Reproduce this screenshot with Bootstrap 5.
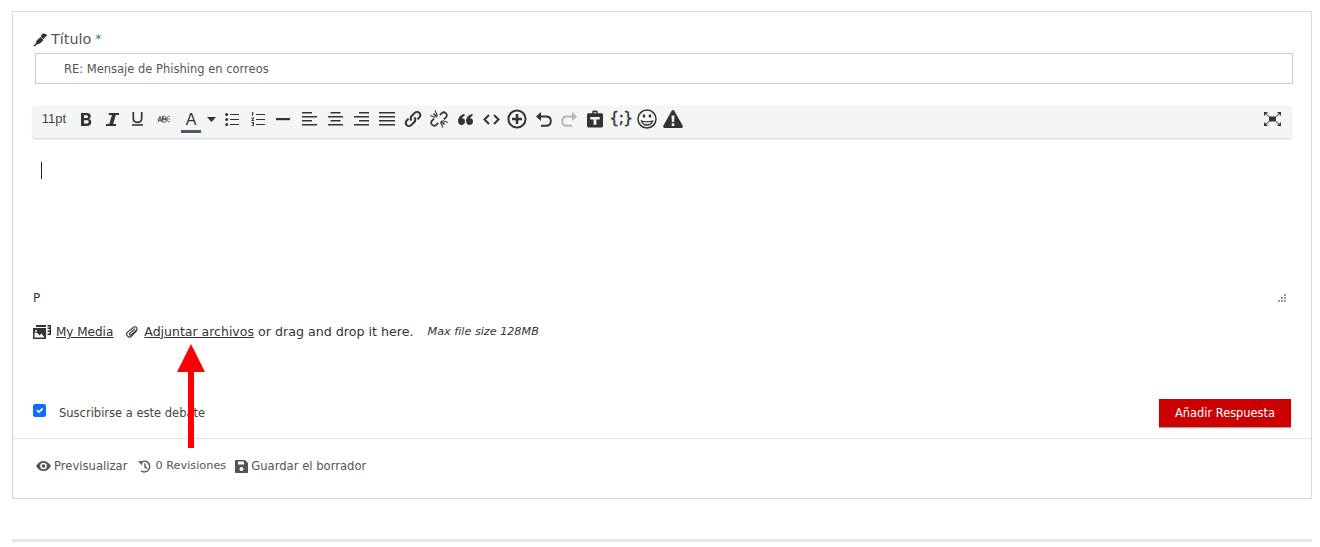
<!DOCTYPE html>
<html lang="es">
<head>
<meta charset="utf-8">
<title>Respuesta</title>
<link href="https://cdn.jsdelivr.net/npm/bootstrap@5.3.0/dist/css/bootstrap.min.css" rel="stylesheet">
<style>
html,body{height:547px;overflow:hidden}
body{background:#fff;font-family:"DejaVu Sans",Verdana,sans-serif;color:#333;font-size:11.6px;padding:11px 8px 0 12px;position:relative}
.panel-box{border:1px solid #d9d9d9;height:488px;display:flex;flex-direction:column}
.form-area{padding:0 20px;flex:0 0 426px;display:flex;flex-direction:column}
.title-label{margin-top:17px;margin-bottom:2px;height:22px;font-size:14.4px;color:#555;display:flex;align-items:center;gap:3px}
.title-label .req{color:#2a8a7a;font-size:12px;margin-left:1px;position:relative;top:-1px}
.title-input{margin-left:2px;width:1258px;height:31px;border:1px solid #ccc;padding:2px 0 0 28px;font-size:11.5px;color:#555;display:flex;align-items:center;box-shadow:inset 0 0 1px #eee}
.ed-bar{margin-top:22px;height:32px;background:#f4f6f6;box-shadow:0 1px 2px rgba(0,0,0,.2);display:flex;align-items:center;width:1258px;color:#333;padding-bottom:6px}
.ed-size{width:40px;text-align:center;font-family:"Liberation Sans",Arial,sans-serif;font-size:13px;color:#444;padding-left:2px}
.tb{width:26px;height:26px;display:flex;align-items:center;justify-content:center;flex:none}
.tb svg{display:block}
.tb-u{margin-left:-1px}
.tb-abc{margin-left:1px}
.tb-a{flex-direction:column;margin-left:1px;position:relative;top:3px;font-size:16px;line-height:15px;font-family:"Liberation Sans",Arial,sans-serif}
.tb-a i{display:block;width:20px;height:3px;background:#505a62;margin-top:3px}
.tb-c{width:16px;margin-left:-1px}
.tb-hr{margin-left:-1px}
.tb-br{font-size:15.5px;font-weight:400;-webkit-text-stroke:.4px #333;letter-spacing:-.5px;white-space:nowrap;color:#333}
.tb-end{margin-left:auto;margin-right:6px}
.ed-body{height:148px;position:relative}
.caret-bar{position:absolute;left:8px;top:24px;width:1px;height:17px;background:#222}
.ed-foot{margin-top:2px;height:20px;display:flex;justify-content:space-between;align-items:center;width:1258px;font-size:12px;color:#333;padding-right:5px}
.att-row{margin-top:14px;height:20px;display:flex;align-items:center;font-size:12.5px;color:#333;white-space:nowrap}
.att-row a{color:#333;text-decoration:underline}
.att-media{margin-right:5px}
.att-first{font-size:12px}
.att-clip{margin-left:13px;margin-right:5px}
.att-tail{font-size:12.66px}
.att-row em{font-size:11.2px;margin-left:14px}
.sub-row{margin-top:57px;height:28px;width:1258px;display:flex;align-items:center;justify-content:space-between}
.sub-check{display:flex;align-items:center;margin:0;padding:0;min-height:0;font-size:11.5px;color:#444;gap:13px}
.sub-check .form-check-input{margin:0;width:13px;height:13px;float:none;border-radius:2px;position:relative;top:-3px}
.sub-check span{padding-top:2px}
.send-btn{background:#c00;color:#fff;border:0;border-radius:0;width:132px;height:28px;font-size:11.4px;padding:2px 0 0;box-shadow:0 1px 1px rgba(0,0,0,.35)}
.btm-row{border-top:1px solid #e3e3e3;flex:1;display:flex;align-items:center;padding:0 0 4px 23px;color:#555;font-size:11.6px;gap:10px}
.btm-row span{display:flex;align-items:center}
.bt-prev{gap:3px;margin-right:1px}
.bt-rev{gap:4px;font-size:11.3px;margin-right:-1px}
.bt-save{gap:3px}
.page-rule{height:3px;background:#e6e6e6;margin-top:40px;width:1300px}
.mark-arrow{position:absolute;left:177px;top:344px}
</style>
</head>
<body>
<div class="panel-box">
  <div class="form-area">
    <div class="title-label">
      <svg width="15" height="14" viewBox="0 0 15 14" fill="#333"><path d="M8.500 1.500c1-1 3-1.300 4.500-.3l1.500 1.300-1.500.8-1.500 1.500-1 1.500-2.500-2.500zM7.500 4l3 3-3.500 3.500-3 1L1.500 13.500l-1-.8 2-2 1-3z"/></svg>
      <span>Título</span><span class="req">*</span>
    </div>
    <div class="title-input">RE: Mensaje de Phishing en correos</div>
    <div class="ed-bar">
      <div class="ed-size">11pt</div>
      <div class="tb"><svg width="12" height="13" viewBox="0 0 12 13" fill="#333"><path fill-rule="evenodd" d="M1 0h6c2.400 0 3.700 1.200 3.700 3.200 0 1.300-.7 2.200-1.700 2.700 1.400.4 2.300 1.400 2.300 3C11.300 11.500 9.600 13 7 13H1zm3 2.300v2.800h2.500c1 0 1.500-.5 1.500-1.400S7.500 2.300 6.500 2.300zm0 5v3.300h2.800c1.200 0 1.800-.6 1.800-1.700S8.500 7.300 7.300 7.300z"/></svg></div>
      <div class="tb"><svg width="13" height="13" viewBox="0 0 13 13" fill="#333"><path d="M3 0h10v2H9.800L7.200 11H10v2H0v-2h3.300l2.600-9H2.500z"/></svg></div>
      <div class="tb tb-u"><svg width="13" height="14" viewBox="0 0 13 14" fill="none" stroke="#333" stroke-width="1.700"><path d="M2.300 0v6.500c0 2.500 1.600 3.800 4.200 3.800s4.200-1.300 4.200-3.800V0"/><path d="M1 13h11" stroke-width="1.600"/></svg></div>
      <div class="tb tb-abc"><svg width="16" height="8" viewBox="0 0 16 10" fill="none" stroke="#333" stroke-width="1"><path d="M.5 9 3 1.500 5.500 9M1.300 7h3.400M6.500 1.500V9h2.300c2.500 0 2.500-3.800 0-3.800H6.500m0 0V1.500h2c2 0 2 3.700 0 3.700M15.500 2.500c-1-1.500-4-1.200-4 2.500s3 4 4 2.500"/><path d="M0 5h16" stroke-width=".8"/></svg></div>
      <div class="tb tb-a"><span>A</span><i></i></div>
      <div class="tb tb-c"><svg width="9" height="5" viewBox="0 0 9 5" fill="#333"><path d="M0 0h9L4.500 5z"/></svg></div>
      <div class="tb"><svg width="14" height="13" viewBox="0 0 14 13" fill="#333"><circle cx="1.700" cy="1.500" r="1.500"/><circle cx="1.700" cy="6.500" r="1.500"/><circle cx="1.700" cy="11.500" r="1.500"/><path d="M5 1h9v1H5zM5 6h9v1H5zM5 11h9v1H5z"/></svg></div>
      <div class="tb"><svg width="14" height="14" viewBox="0 0 14 14" fill="#333"><path d="M5 2h9v1H5zM5 7h9v1H5zM5 12h9v1H5z"/><path d="M1 0h1.200v3.800H1zM.5 5.500h2.500v1.200L1.500 8H3v.9H.5V8L2 6.500H.5zM.5 10h2.500v3.800H.5v-.8H2v-.7H1v-.7h1v-.7H.5z"/></svg></div>
      <div class="tb tb-hr"><svg width="14" height="3" viewBox="0 0 14 3" fill="#333"><path d="M0 0h14v2.200H0z"/></svg></div>
      <div class="tb"><svg width="15" height="14" viewBox="0 0 15 14" fill="#333"><path d="M0 0h10v1.500H0zM0 4h15v1.500H0zM0 8h10v1.500H0zM0 12h15v1.500H0z"/></svg></div>
      <div class="tb"><svg width="15" height="14" viewBox="0 0 15 14" fill="#333"><path d="M2.500 0h10v1.500h-10zM0 4h15v1.500H0zM2.500 8h10v1.500h-10zM0 12h15v1.500H0z"/></svg></div>
      <div class="tb"><svg width="15" height="14" viewBox="0 0 15 14" fill="#333"><path d="M5 0h10v1.500H5zM0 4h15v1.500H0zM5 8h10v1.500H5zM0 12h15v1.500H0z"/></svg></div>
      <div class="tb"><svg width="16" height="14" viewBox="0 0 16 14" fill="#333"><path d="M0 0h16v1.600H0zM0 4h16v1.600H0zM0 8h16v1.600H0zM0 12h16v1.600H0z"/></svg></div>
      <div class="tb"><svg width="18" height="18" viewBox="0 0 17 17" fill="none" stroke="#333" stroke-width="1.900"><path d="M7.200 10a3 3 0 0 1 0-4.300l3-3a3 3 0 0 1 4.300 4.300l-1.800 1.800"/><path d="M9.800 7a3 3 0 0 1 0 4.300l-3 3A3 3 0 0 1 2.500 10l1.800-1.800"/></svg></div>
      <div class="tb"><svg width="18" height="18" viewBox="0 0 18 18" fill="none" stroke="#333" stroke-width="1.700"><path d="M9.800 5.200l2-2a2.900 2.900 0 0 1 4.100 4.100l-2 2M8.200 12.800l-2 2a2.900 2.900 0 0 1-4.100-4.100l2-2"/><path d="M7 7 3.500 3.500M11 11l3.500 3.500" stroke-width="1.500"/><path d="M7.500 6 5 .5M5.500 7.500 .3 5.500M10.500 12l2.500 5.500M12.500 10.500l5.200 2" stroke-width="1.100"/></svg></div>
      <div class="tb"><svg width="15" height="11" viewBox="0 0 15 11" fill="#333"><path d="M6.500 0v2C5 2.500 4.300 3.300 4 4.300c1.700-.2 3 1 3 3.100C7 9.500 5.700 11 3.500 11 1.300 11 0 9.300 0 7c0-3.600 2.700-6.300 6.500-7zM14.500 0v2c-1.500.5-2.200 1.300-2.500 2.300 1.700-.2 3 1 3 3.100 0 2.100-1.300 3.600-3.500 3.600C9.300 11 8 9.300 8 7c0-3.600 2.700-6.300 6.500-7z"/></svg></div>
      <div class="tb"><svg width="17" height="11" viewBox="0 0 17 11" fill="none" stroke="#333" stroke-width="2"><path d="M6 1 1.500 5.500 6 10M11 1l4.500 4.500L11 10"/></svg></div>
      <div class="tb"><svg width="20" height="20" viewBox="0 0 20 20" fill="none" stroke="#333"><circle cx="10" cy="10" r="8.600" stroke-width="2"/><path d="M10 5v10M5 10h10" stroke-width="2.600"/></svg></div>
      <div class="tb"><svg width="17" height="15" viewBox="0 0 17 15" fill="none" stroke="#333" stroke-width="1.900"><path d="M3 4.500h8c3 0 4.800 1.800 4.800 4.500S14 13.800 11 13.800H6"/><path d="M6 0v9L1 4.500z" fill="#333" stroke="none"/></svg></div>
      <div class="tb"><svg width="17" height="15" viewBox="0 0 17 15" fill="none" stroke="#b5b5b5" stroke-width="1.900"><path d="M14 4.500H6C3 4.500 1.200 6.300 1.200 9S3 13.800 6 13.800h5"/><path d="M11 0v9l5-4.500z" fill="#b5b5b5" stroke="none"/></svg></div>
      <div class="tb"><svg width="16" height="18" viewBox="0 0 17 18" fill="#333"><path fill-rule="evenodd" d="M1.500 3H5.500V1.500C5.500.5 6.500 0 8.500 0s3 .5 3 1.500V3h4c.8 0 1.500.7 1.500 1.500v12c0 .8-.7 1.500-1.500 1.500h-14C.7 18 0 17.300 0 16.500v-12C0 3.700.7 3 1.500 3zM7 1.800V3h3V1.800zM3.500 7v2.500h3.500V15h3V9.500h3.500V7z"/></svg></div>
      <div class="tb tb-br">{;}</div>
      <div class="tb"><svg width="20" height="20" viewBox="0 0 20 20" fill="none" stroke="#333" stroke-width="1.500"><circle cx="10" cy="10" r="9"/><path d="M4.500 12c1 2.700 3 4 5.500 4s4.500-1.300 5.500-4c-3.500 1-7.500 1-11 0z" stroke-width="1.300"/><ellipse cx="7" cy="7" rx="1.300" ry="1.800" fill="#333" stroke="none"/><ellipse cx="13" cy="7" rx="1.300" ry="1.800" fill="#333" stroke="none"/></svg></div>
      <div class="tb"><svg width="20" height="18" viewBox="0 0 20 18" fill="#333"><path fill-rule="evenodd" d="M10 0c.6 0 1 .3 1.300.8l8.400 15c.5 1-.1 2.200-1.300 2.200H1.600C.4 18-.2 16.800.3 15.800L8.700.8C9 .3 9.400 0 10 0zM8.500 5.500l.4 6.500h2.200l.4-6.500zM8.700 13.300v2.600h2.600v-2.600z"/></svg></div>
      <div class="tb tb-end"><svg width="17" height="14" viewBox="0 0 17 14" fill="#333"><path d="M5 4.500h7v5H5z"/><path d="M0 0h4L0 4zM17 0h-4l4 4zM0 14h4L0 10zM17 14h-4l4-4z"/><path d="M1.500 1.500 5 4.500M15.500 1.500 12 4.500M1.500 12.500 5 9.500M15.500 12.500 12 9.500" stroke="#333" stroke-width="1"/></svg></div>
    </div>
    <div class="ed-body"><div class="caret-bar"></div></div>
    <div class="ed-foot"><span>P</span>
      <svg width="8" height="8" viewBox="0 0 8 8" fill="#999"><path d="M6 0h2v2H6zM3 3h2v2H3zM6 3h2v2H6zM0 6h2v2H0zM3 6h2v2H3zM6 6h2v2H6z"/></svg>
    </div>
    <div class="att-row">
      <svg class="att-media" width="18" height="14" viewBox="0 0 18 14" fill="#333"><path fill-rule="evenodd" d="M0 3h13v11H0zm1.500 4.500v5h10l-3-4-2 2-2-2.500zM3 5a1 1 0 1 0 0 2 1 1 0 0 0 0-2z"/><path d="M3 0h10v2H3zM14.500 0H18v10h-3.500V8.500H16.500V7h-2V5.500h2V4h-2V2.500h2V1.500h-2z"/></svg>
      <a href="#" class="att-first">My Media</a>
      <svg class="att-clip" width="13" height="14" viewBox="0 0 14 14" fill="none" stroke="#333" stroke-width="1.200"><path d="M12 5 6 11.500a3 3 0 0 1-4.300-4.300L8.500 1.700a2.200 2.200 0 0 1 3 3L5.500 10A1 1 0 0 1 4 8.500L9.500 3.500"/></svg>
      <a href="#">Adjuntar archivos</a><span class="att-tail">&nbsp;or drag and drop it here.</span>
      <em>Max file size 128MB</em>
    </div>
    <div class="sub-row">
      <label class="form-check sub-check"><input class="form-check-input" type="checkbox" checked><span>Suscribirse a este debate</span></label>
      <button class="btn send-btn" type="button">Añadir Respuesta</button>
    </div>
  </div>
  <div class="btm-row">
    <span class="bt-prev"><svg width="15" height="10" viewBox="0 0 15 10" fill="#555"><path fill-rule="evenodd" d="M7.500 0c3 0 5.800 2 7.500 5-1.700 3-4.500 5-7.500 5S1.700 8 0 5c1.700-3 4.500-5 7.500-5zm0 1.700a3.300 3.300 0 1 0 0 6.600 3.300 3.300 0 0 0 0-6.600zm0 1.500a1.800 1.800 0 1 1 0 3.600 1.800 1.800 0 0 1 0-3.600z"/></svg>Previsualizar</span>
    <span class="bt-rev"><svg width="13" height="13" viewBox="0 0 13 13" fill="none" stroke="#555" stroke-width="1.400"><path d="M2.200 3A5.400 5.400 0 1 1 3 10.800"/><path d="M0 1l4.500.5L4 5.500z" fill="#555" stroke="none"/><path d="M7 3.500V7l2.300 1.300"/></svg>0 Revisiones</span>
    <span class="bt-save"><svg width="13" height="13" viewBox="0 0 13 13" fill="#555"><path fill-rule="evenodd" d="M1 0h9l3 3v9c0 .6-.4 1-1 1H1c-.6 0-1-.4-1-1V1c0-.6.4-1 1-1zm2 1.500v3h6v-3zM6.500 7a2 2 0 1 0 0 4 2 2 0 0 0 0-4z"/></svg>Guardar el borrador</span>
  </div>
</div>
<div class="page-rule"></div>
<svg class="mark-arrow" width="28" height="104" viewBox="0 0 28 104" fill="#f00"><path d="M14 0 28 28H17V104H11V28H0z"/></svg>
<script src="https://cdn.jsdelivr.net/npm/bootstrap@5.3.0/dist/js/bootstrap.bundle.min.js"></script>
</body>
</html>
